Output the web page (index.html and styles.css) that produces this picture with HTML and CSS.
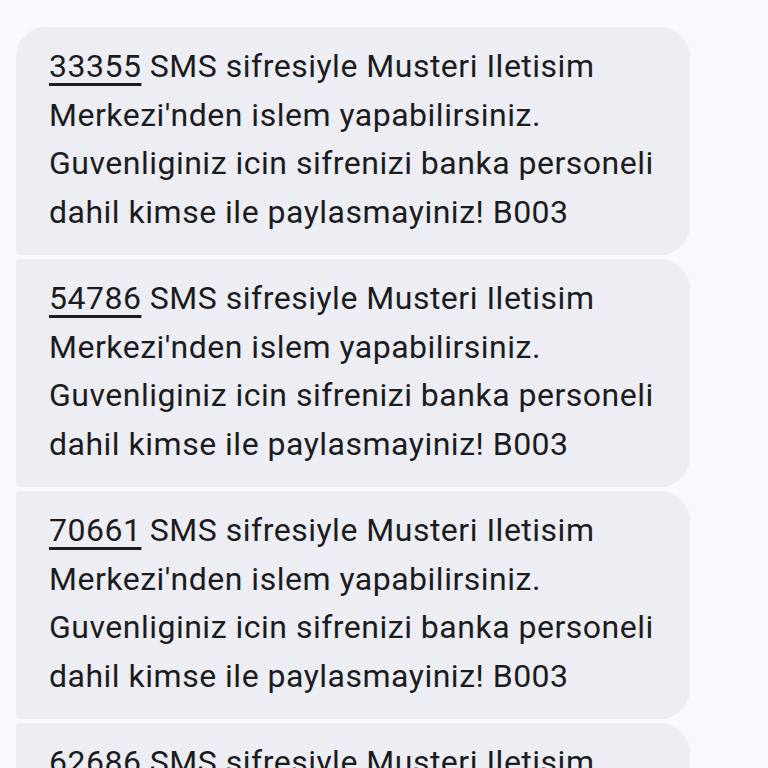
FILE: index.html
```html
<!DOCTYPE html>
<html lang="tr">
<head>
  <meta charset="UTF-8">
  <title>Mesajlar</title>
  <link rel="stylesheet" href="styles.css">
</head>
<body>

  <div class="thread">
    <div class="bubble first">
      <p><span class="code">33355</span> SMS sifresiyle Musteri Iletisim Merkezi'nden islem yapabilirsiniz. Guvenliginiz icin sifrenizi banka personeli dahil kimse ile paylasmayiniz! B003</p>
    </div>

    <div class="bubble">
      <p><span class="code">54786</span> SMS sifresiyle Musteri Iletisim Merkezi'nden islem yapabilirsiniz. Guvenliginiz icin sifrenizi banka personeli dahil kimse ile paylasmayiniz! B003</p>
    </div>

    <div class="bubble">
      <p><span class="code">70661</span> SMS sifresiyle Musteri Iletisim Merkezi'nden islem yapabilirsiniz. Guvenliginiz icin sifrenizi banka personeli dahil kimse ile paylasmayiniz! B003</p>
    </div>

    <div class="bubble">
      <p><span class="code">62686</span> SMS sifresiyle Musteri Iletisim Merkezi'nden islem yapabilirsiniz. Guvenliginiz icin sifrenizi banka personeli dahil kimse ile paylasmayiniz! B003</p>
    </div>
  </div>

</body>
</html>
```

FILE: styles.css
```css
body {
  background-color: #f8f9fd;
  color: #1c1c1e;
  font-family: Roboto, "Noto Sans", sans-serif;
  margin: 0;
  padding: 0;
  overflow: hidden;
}

.thread {
  display: flex;
  flex-direction: column;
  gap: 4px;
  padding: 27px 0 0 16px;
}

.bubble {
  background-color: #eceef3;
  width: 674px;
  box-sizing: border-box;
  padding: 15px 20px 19px 33px;
  border-radius: 4px 30px 30px 4px;
}

.bubble.first {
  border-top-left-radius: 30px;
}

.bubble p {
  margin: 0;
  font-size: 32px;
  letter-spacing: 0.5px;
  line-height: 48.5px;
}

.code {
  text-decoration: underline;
  text-decoration-thickness: 2.5px;
  text-underline-offset: 6px;
}
```
